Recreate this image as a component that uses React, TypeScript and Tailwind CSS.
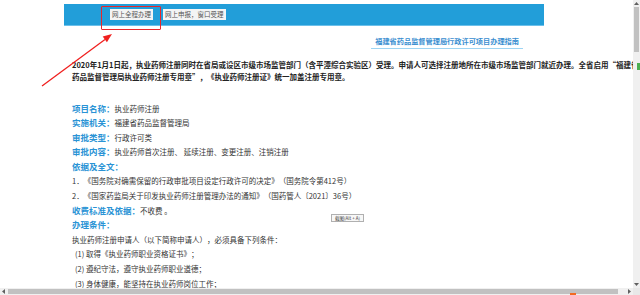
const rows: { label?: string; value: string; indent?: boolean }[] = [
  { label: "项目名称：", value: "执业药师注册" },
  { label: "实施机关：", value: "福建省药品监督管理局" },
  { label: "审批类型：", value: "行政许可类" },
  { label: "审批内容：", value: "执业药师首次注册、 延续注册、变更注册、注销注册" },
  { label: "依据及全文：", value: "" },
  { value: "1．《国务院对确需保留的行政审批项目设定行政许可的决定》（国务院令第412号）" },
  { value: "2．《国家药监局关于印发执业药师注册管理办法的通知》（国药管人〔2021〕36号）" },
  { label: "收费标准及依据：", value: "不收费 。" },
  { label: "办理条件：", value: "" },
  { value: "执业药师注册申请人（以下简称申请人），必须具备下列条件：" },
  { value: "(1) 取得《执业药师职业资格证书》；", indent: true },
  { value: "(2) 遵纪守法，遵守执业药师职业道德；", indent: true },
  { value: "(3) 身体健康，能坚持在执业药师岗位工作；", indent: true },
];

function Tri({ dir }: { dir: "up" | "down" | "left" | "right" }) {
  const pts = {
    up: "0,4 2.5,1 5,4",
    down: "0,1 2.5,4 5,1",
    left: "4,0 1,2.5 4,5",
    right: "1,0 4,2.5 1,5",
  }[dir];
  return (
    <svg width="5" height="5" viewBox="0 0 5 5">
      <polygon points={pts} fill="#606060" />
    </svg>
  );
}

export default function App() {
  return (
    <div
      lang="zh-CN"
      className="relative flex h-[295px] w-[640px] flex-col overflow-hidden bg-white font-['Noto_Sans_CJK_SC','Noto_Sans',sans-serif] [text-spacing-trim:space-all]"
    >
      <div className="flex min-h-0 flex-1">
        {/* page content */}
        <div className="relative min-w-0 flex-1 overflow-hidden">
          <div className="ml-[64px] w-[480px] pt-[4px]">
            <div className="flex h-[22px] items-center gap-[10px] border-b border-[#6cc0ea] bg-[#229ed9] pl-[46px]">
              <span className="h-[11px] bg-[#f4f4f4] px-[2px] text-[6.5px] leading-[11px] text-[#555]">
                网上全程办理
              </span>
              <span className="h-[11px] bg-[#f4f4f4] px-[2px] text-[6.5px] leading-[11px] text-[#555]">
                网上申报，窗口受理
              </span>
            </div>

            <div className="mt-[9px] flex justify-end pr-[21px]">
              <div className="border-b border-[#9dd4f3] px-[4px] pb-[1px] text-[7.2px] font-bold leading-[12px] text-[#3a8ed0]">
                福建省药品监督管理局行政许可项目办理指南
              </div>
            </div>

            <div className="mt-[10px] whitespace-nowrap pl-[8px] text-[7.5px] font-bold leading-[12px] text-[#222]">
              <p>
                2020年1月1日起，执业药师注册同时在省局或设区市级市场监管部门（含平潭综合实验区）受理。申请人可选择注册地所在市级市场监管部门就近办理。全省启用“福建省药品监督管理局执业药师注册专用章”
              </p>
              <p>药品监督管理局执业药师注册专用章”，《执业药师注册证》统一加盖注册专用章。</p>
            </div>

            <div className="mt-[14.5px] whitespace-nowrap pl-[8px]">
              {rows.map((r, i) => (
                <div key={i} className={`h-[14.6px] leading-[14.6px] ${r.indent ? "pl-[3px]" : ""}`}>
                  {r.label && (
                    <span className="text-[8.5px] font-bold text-[#2a93d5]">{r.label}</span>
                  )}
                  <span className="text-[7.5px] text-[#333]">{r.value}</span>
                </div>
              ))}
            </div>
          </div>

          {/* annotation overlay */}
          <div className="absolute left-[101px] top-[6px] h-[24px] w-[60px] rounded-[1px] border-[1.5px] border-[#e8262b]" />
          <svg className="absolute left-0 top-0" width="130" height="100" viewBox="0 0 130 100">
            <line x1="42" y1="86" x2="105" y2="39.5" stroke="#f0201f" strokeWidth="1.3" />
            <polygon points="112,34 106.9,42.2 102.7,36.6" fill="#f0201f" />
          </svg>
          <div className="absolute left-[331px] top-[214px] h-[8px] w-[33px] border border-[#b0b0b0] bg-[#f7f7f7] text-center text-[4.5px] leading-[6px] text-[#444]">
            截图(Alt + A)
          </div>
        </div>

        {/* vertical scrollbar */}
        <div className="flex w-[7px] flex-col items-center bg-[#f0f0f0]">
          <div className="flex h-[6px] items-center justify-center">
            <Tri dir="up" />
          </div>
          <div className="mt-[1px] h-[45px] w-[5px] bg-[#c1c1c1]" />
          <div className="mt-[11px] h-[7px] w-[3px] self-end bg-[#4caf50]" />
          <div className="flex-1" />
          <div className="mb-[1px] flex h-[6px] items-center justify-center">
            <Tri dir="down" />
          </div>
        </div>
      </div>

      {/* horizontal scrollbar */}
      <div className="relative flex h-[7px] items-center bg-[#f0f0f0]">
        <div className="flex w-[7px] justify-center">
          <Tri dir="left" />
        </div>
        <div className="ml-[1px] h-[5px] w-[610px] bg-[#c1c1c1]" />
        <div className="flex-1" />
        <div className="flex w-[7px] justify-center">
          <Tri dir="right" />
        </div>
        <div className="h-[7px] w-[7px] bg-[#e8e8e8]" />
        <div className="absolute bottom-0 left-[570px] h-[2px] w-[6px] bg-[#f26b21]" />
      </div>
    </div>
  );
}
